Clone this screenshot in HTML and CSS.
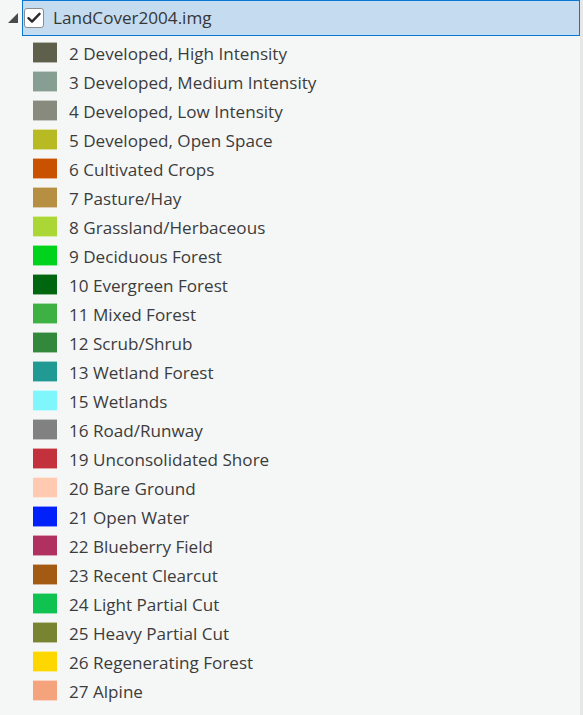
FILE: index.html
```html
<!DOCTYPE html>
<html>
<head>
<meta charset="utf-8">
<link rel="stylesheet" href="styles.css">
</head>
<body>
<div class="pane">
  <div class="tree">
    <div class="layer">
      <svg class="expander" width="10" height="10" viewBox="0 0 10 10"><polygon points="10,0 10,10 0,10" fill="#4a4a4a"/></svg>
      <div class="header">
        <span class="checkbox">
          <svg width="14" height="12" viewBox="0 0 14 12"><path d="M1.5 6.2 L5 9.6 L12.5 1.8" fill="none" stroke="#2b2b2b" stroke-width="2.4" stroke-linecap="round" stroke-linejoin="round"/></svg>
        </span>
        <span class="title">LandCover2004.img</span>
      </div>
    </div>
    <ul class="legend">
      <li><span class="sw c2"></span><span class="label">2 Developed, High Intensity</span></li>
      <li><span class="sw c3"></span><span class="label">3 Developed, Medium Intensity</span></li>
      <li><span class="sw c4"></span><span class="label">4 Developed, Low Intensity</span></li>
      <li><span class="sw c5"></span><span class="label">5 Developed, Open Space</span></li>
      <li><span class="sw c6"></span><span class="label">6 Cultivated Crops</span></li>
      <li><span class="sw c7"></span><span class="label">7 Pasture/Hay</span></li>
      <li><span class="sw c8"></span><span class="label">8 Grassland/Herbaceous</span></li>
      <li><span class="sw c9"></span><span class="label">9 Deciduous Forest</span></li>
      <li><span class="sw c10"></span><span class="label">10 Evergreen Forest</span></li>
      <li><span class="sw c11"></span><span class="label">11 Mixed Forest</span></li>
      <li><span class="sw c12"></span><span class="label">12 Scrub/Shrub</span></li>
      <li><span class="sw c13"></span><span class="label">13 Wetland Forest</span></li>
      <li><span class="sw c15"></span><span class="label">15 Wetlands</span></li>
      <li><span class="sw c16"></span><span class="label">16 Road/Runway</span></li>
      <li><span class="sw c19"></span><span class="label">19 Unconsolidated Shore</span></li>
      <li><span class="sw c20"></span><span class="label">20 Bare Ground</span></li>
      <li><span class="sw c21"></span><span class="label">21 Open Water</span></li>
      <li><span class="sw c22"></span><span class="label">22 Blueberry Field</span></li>
      <li><span class="sw c23"></span><span class="label">23 Recent Clearcut</span></li>
      <li><span class="sw c24"></span><span class="label">24 Light Partial Cut</span></li>
      <li><span class="sw c25"></span><span class="label">25 Heavy Partial Cut</span></li>
      <li><span class="sw c26"></span><span class="label">26 Regenerating Forest</span></li>
      <li><span class="sw c27"></span><span class="label">27 Alpine</span></li>
    </ul>
  </div>
  <div class="scrollbar"></div>
</div>
</body>
</html>
```
FILE: styles.css
```css
html, body {
  margin: 0;
  padding: 0;
  background: #f5f7f7;
}
body {
  font-family: "Open Sans", "Noto Sans", sans-serif;
  font-size: 17.1px;
  color: #3c3c3c;
}
.pane {
  display: flex;
  width: 583px;
  height: 715px;
  overflow: hidden;
}
.tree {
  flex: 1;
}
.scrollbar {
  width: 3px;
  background: #e6e7e7;
}
.layer {
  display: flex;
  align-items: flex-start;
}
.expander {
  margin: 13px 0 0 8px;
  flex: none;
}
.header {
  margin-left: 4px;
  width: 556px;
  height: 34px;
  border: 1px solid #0a78d2;
  background: #c5dcf0;
  display: flex;
  align-items: center;
  box-sizing: content-box;
}
.checkbox {
  width: 18px;
  height: 18px;
  margin-left: 1px;
  border: 1px solid #8c8c8c;
  border-radius: 3px;
  background: #ffffff;
  display: flex;
  align-items: center;
  justify-content: center;
}
.title {
  margin-left: 9px;
  color: #363636;
  line-height: 1;
}
.legend {
  list-style: none;
  margin: 2px 0 0 0;
  padding: 0 0 0 33px;
}
.legend li {
  height: 29px;
  display: flex;
  align-items: center;
}
.sw {
  width: 24px;
  height: 21px;
  flex: none;
  background-image: linear-gradient(rgba(255,255,255,0.55) 1px, transparent 1px, transparent 20px, rgba(255,255,255,0.55) 20px);
}
.label {
  margin-left: 12px;
  line-height: 1;
  position: relative;
  top: 1px;
}
.c2 { background-color: #5e604c; }
.c3 { background-color: #879e92; }
.c4 { background-color: #878a7c; }
.c5 { background-color: #b8ba24; }
.c6 { background-color: #c85200; }
.c7 { background-color: #b68f42; }
.c8 { background-color: #aad636; }
.c9 { background-color: #00d31c; }
.c10 { background-color: #006710; }
.c11 { background-color: #3db144; }
.c12 { background-color: #32893b; }
.c13 { background-color: #209a93; }
.c15 { background-color: #7ef6fc; }
.c16 { background-color: #818181; }
.c19 { background-color: #c3323c; }
.c20 { background-color: #ffc9b2; }
.c21 { background-color: #0021fa; }
.c22 { background-color: #b0305f; }
.c23 { background-color: #a35b14; }
.c24 { background-color: #10c24f; }
.c25 { background-color: #788432; }
.c26 { background-color: #ffd700; }
.c27 { background-color: #f4a37c; }
```
